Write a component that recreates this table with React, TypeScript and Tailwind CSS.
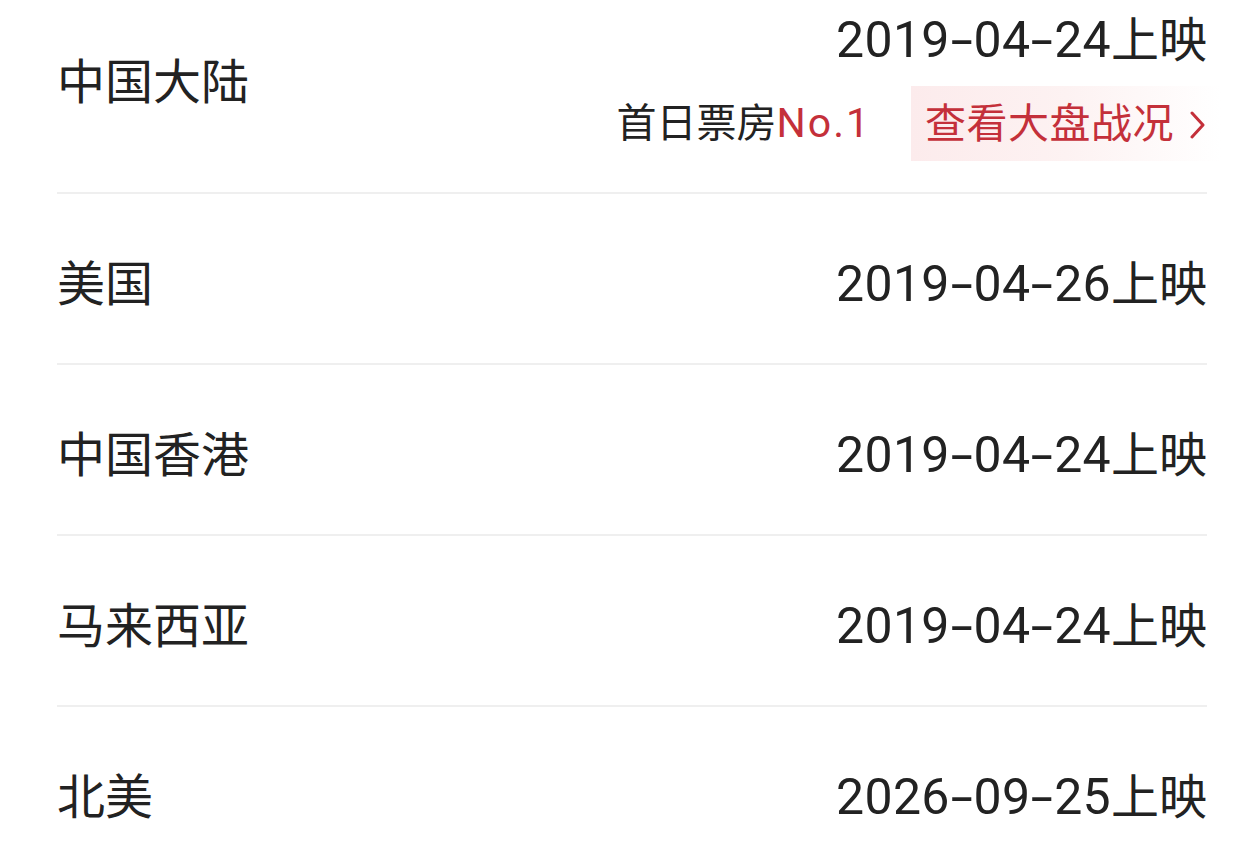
import React from "react";

const font = { fontFamily: "Roboto, 'Noto Sans CJK SC', sans-serif" };

const rows = [
  { name: "美国", date: "2019-04-26" },
  { name: "中国香港", date: "2019-04-24" },
  { name: "马来西亚", date: "2019-04-24" },
  { name: "北美", date: "2026-09-25" },
];

function DateText({ date }: { date: string }) {
  const parts = date.split("-");
  return (
    <div className="flex items-baseline whitespace-nowrap">
      {parts.map((p, i) => (
        <React.Fragment key={i}>
          {i > 0 && (
            <span className="mx-[5px] inline-block scale-x-[1.6] text-[50px] leading-[60px]">-</span>
          )}
          <span className="text-[50px] leading-[60px] tracking-[0.3px]">{p}</span>
        </React.Fragment>
      ))}
      <span className="text-[48px] leading-[60px]">上映</span>
    </div>
  );
}

export default function App() {
  return (
    <div className="w-[1256px] h-[858px] overflow-hidden bg-white text-[#222222]" style={font}>
      <div className="pl-[57px] pr-[49px]">
        <div className="flex h-[194px] items-start justify-between border-b-2 border-[#efefef]">
          <div className="mt-[53px] text-[48px] leading-[60px]">中国大陆</div>
          <div className="flex flex-col items-end">
            <div className="mt-[10px]">
              <DateText date="2019-04-24" />
            </div>
            <div className="mt-[15px] flex items-center">
              <div className="text-[40px] leading-[50px]">
                首日票房<span className="text-[41px] tracking-[2px] text-[#c4303a]">No.1</span>
              </div>
              <div className="ml-[40px] -mr-[14px] flex h-[75px] w-[310px] items-center bg-gradient-to-r from-[#fcebec] via-[#fdf2f2] to-[#ffffff] pl-[14px] text-[41px] leading-[50px] text-[#c4303a]">
                <span className="tracking-[0.5px]">查看大盘战况</span>
                <svg className="ml-[16px] mt-[2px]" width="16" height="30" viewBox="0 0 16 30" fill="none">
                  <path d="M2 3 L13 15 L2 27" stroke="#c4303a" strokeWidth="3" strokeLinecap="round" strokeLinejoin="round" />
                </svg>
              </div>
            </div>
          </div>
        </div>
        {rows.map((r) => (
          <div
            key={r.name}
            className="flex h-[171px] items-center justify-between border-b-2 border-[#efefef] pt-[12px]"
          >
            <div className="text-[48px] leading-[60px]">{r.name}</div>
            <DateText date={r.date} />
          </div>
        ))}
      </div>
    </div>
  );
}
